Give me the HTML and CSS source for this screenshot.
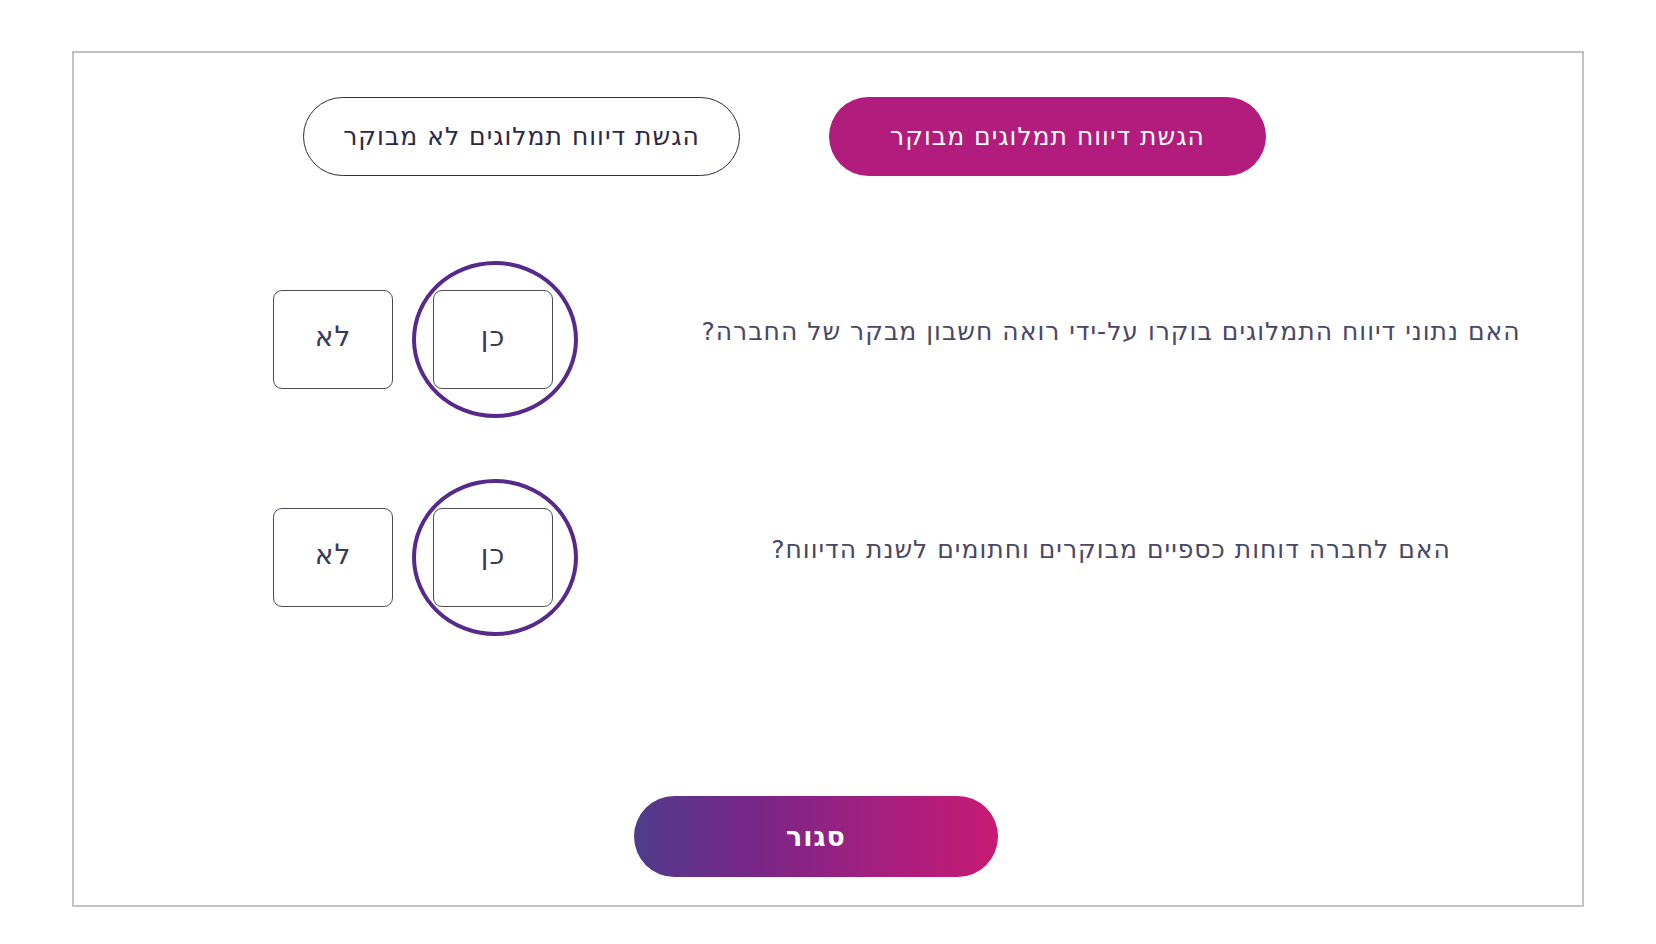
FILE: index.html
```html
<!DOCTYPE html>
<html lang="he" dir="rtl">
<head>
    <meta charset="UTF-8">
    <meta name="viewport" content="width=device-width, initial-scale=1.0">
    <title>דיווח תמלוגים</title>
    <link rel="stylesheet" href="styles.css">
</head>

<body>

    <section class="frame">
        <div class="tabs">
            <button class="tab tab-active">הגשת דיווח תמלוגים מבוקר</button>
            <button class="tab">הגשת דיווח תמלוגים לא מבוקר</button>
        </div>

        <div class="row row-first">
            <p class="question">האם נתוני דיווח התמלוגים בוקרו על-ידי רואה חשבון מבקר של החברה?</p>
            <div class="answers">
                <button class="answer answer-picked">כן<span class="ring"></span></button>
                <button class="answer">לא</button>
            </div>
        </div>

        <div class="row row-second">
            <p class="question">האם לחברה דוחות כספיים מבוקרים וחתומים לשנת הדיווח?</p>
            <div class="answers">
                <button class="answer answer-picked">כן<span class="ring"></span></button>
                <button class="answer">לא</button>
            </div>
        </div>

        <div class="footer">
            <button class="btn-close">סגור</button>
        </div>
    </section>

</body>

</html>
```

FILE: styles.css
```css
body {
    margin: 0;
    background-color: #ffffff;
    font-family: "DejaVu Sans", "Liberation Sans", sans-serif;
}

button {
    font-family: inherit;
    cursor: pointer;
}

.frame {
    margin: 51px auto 0 72px;
    width: 1512px;
    height: 856px;
    box-sizing: border-box;
    border: 2px solid #c2c2c2;
}

/* top switch buttons */
.tabs {
    display: flex;
    gap: 89px;
    margin-top: 44px;
    padding-right: 316px;
}

.tab {
    width: 437px;
    height: 79px;
    border-radius: 40px;
    border: 1.5px solid #2e2b4c;
    background-color: #ffffff;
    color: #2b2947;
    font-size: 25px;
    letter-spacing: 1px;
}

.tab-active {
    border: none;
    background-color: #b21c7c;
    color: #ffffff;
}

/* question rows */
.row {
    display: flex;
    align-items: center;
}

.row-first {
    margin-top: 114px;
}

.row-second {
    margin-top: 119px;
}

.question {
    width: 942px;
    margin: 0 0 16px 0;
    text-align: center;
    font-size: 25px;
    letter-spacing: 1px;
    color: #4a4766;
}

.answers {
    display: flex;
    gap: 40px;
    margin-right: 87px;
}

.answer {
    position: relative;
    width: 120px;
    height: 99px;
    border: 1.5px solid #4d4d57;
    border-radius: 9px;
    background-color: #ffffff;
    color: #3b3957;
    font-size: 28px;
    letter-spacing: 1px;
    padding: 0 0 6px 0;
}

.ring {
    position: absolute;
    left: -22px;
    top: -30px;
    width: 166px;
    height: 157px;
    box-sizing: border-box;
    border: 4px solid #57298c;
    border-radius: 50%;
}

/* close */
.footer {
    display: flex;
    margin-top: 189px;
    padding-right: 584px;
}

.btn-close {
    width: 364px;
    height: 81px;
    border: none;
    border-radius: 41px;
    background: linear-gradient(90deg, #4f3c8b 0%, #742788 30%, #a11f80 65%, #c81a73 100%);
    color: #ffffff;
    font-size: 27px;
    font-weight: 700;
    letter-spacing: 1px;
}
```
